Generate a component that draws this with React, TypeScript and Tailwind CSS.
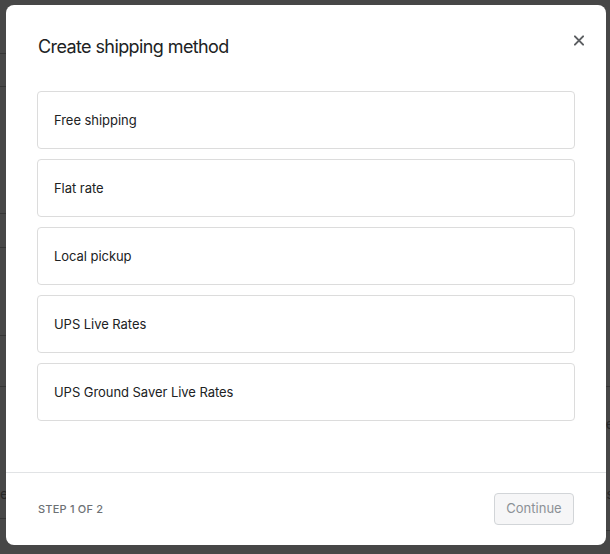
import React from "react";

const methods = [
  "Free shipping",
  "Flat rate",
  "Local pickup",
  "UPS Live Rates",
  "UPS Ground Saver Live Rates",
];

function Backdrop() {
  const leftLines = [53, 86, 213, 247, 335, 386, 518];
  const rightLines = [386, 530];
  return (
    <div className="absolute inset-0 bg-[#474747]">
      {leftLines.map((y) => (
        <div key={"l" + y} className="absolute left-0 h-px w-[8px] bg-[#353535]" style={{ top: y }} />
      ))}
      {rightLines.map((y) => (
        <div key={"r" + y} className="absolute right-0 h-px w-[8px] bg-[#353535]" style={{ top: y }} />
      ))}
      <span className="absolute left-[-8px] top-[483px] text-[14px] text-[#262626]">ce</span>
      <span className="absolute right-[-4px] top-[413px] text-[14px] text-[#262626]">e</span>
      <span className="absolute right-[-4px] top-[483px] text-[14px] text-[#262626]">s</span>
    </div>
  );
}

export default function App() {
  return (
    <div
      className="relative h-[554px] w-[610px] overflow-hidden"
      style={{ fontFamily: "Inter, 'Noto Sans', sans-serif" }}
    >
      <Backdrop />
      <div className="absolute left-[6px] top-[5px] flex h-[540px] w-[600px] flex-col rounded-[8px] bg-white">
        <div className="flex items-start justify-between pl-8 pr-[22px] pt-[30px] pb-[32px]">
          <h2 className="text-[18px] leading-6 tracking-[-0.6px] text-[#202223]">Create shipping method</h2>
          <button className="mt-[0px] flex h-[10px] w-[10px] items-center justify-center text-[#5c5f62]">
            <svg width="11" height="11" viewBox="0 0 11 11" fill="none">
              <path d="M1 1L10 10M10 1L1 10" stroke="currentColor" strokeWidth="2.2" strokeLinecap="round" />
            </svg>
          </button>
        </div>
        <div className="flex flex-1 flex-col gap-[10px] px-[31px]">
          {methods.map((m) => (
            <div
              key={m}
              className="flex h-[58px] items-center rounded-[4px] border border-[#dcdcdc] px-4 pt-[2px] text-[13px] tracking-[-0.05px] text-[#202223]"
            >
              {m}
            </div>
          ))}
        </div>
        <div className="flex items-center justify-between border-t border-[#e1e3e5] px-8 py-5">
          <span className="text-[11px] font-medium tracking-[0.2px] text-[#6d7175]">STEP 1 OF 2</span>
          <button className="h-8 w-20 rounded-[4px] border border-[#d2d5d8] bg-[#f6f6f7] text-[13px] text-[#8c9196]">
            Continue
          </button>
        </div>
      </div>
    </div>
  );
}
